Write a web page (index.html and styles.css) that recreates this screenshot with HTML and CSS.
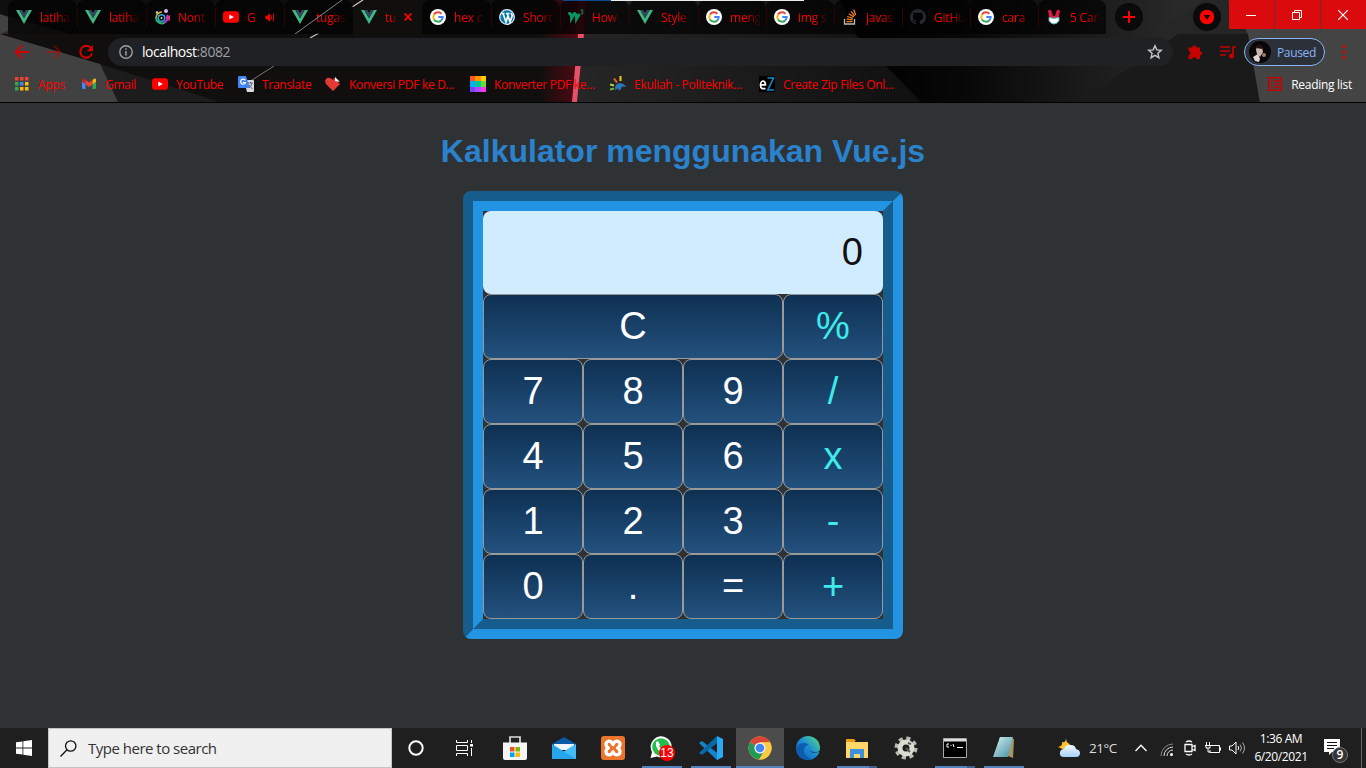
FILE: index.html
```html
<!DOCTYPE html>
<html lang="id">
<head>
<meta charset="utf-8">
<title>Kalkulator</title>
<link rel="stylesheet" href="styles.css">
</head>
<body>
<svg class="defs" width="0" height="0">
  <defs>
    <linearGradient id="gGlow" x1="0" x2="1"><stop offset="0" stop-color="#a00018" stop-opacity="0"/><stop offset=".85" stop-color="#a00018" stop-opacity=".5"/><stop offset="1" stop-color="#a00018" stop-opacity=".1"/></linearGradient>
    <linearGradient id="gMid" x1="0" x2="1"><stop offset="0" stop-color="#262626"/><stop offset=".6" stop-color="#181818"/><stop offset="1" stop-color="#101010"/></linearGradient>
    <linearGradient id="gRight" gradientUnits="userSpaceOnUse" x1="900" x2="1180" y1="0" y2="0"><stop offset="0" stop-color="#030303"/><stop offset=".25" stop-color="#080808"/><stop offset="1" stop-color="#292929"/></linearGradient>
    <linearGradient id="gEdge" x1="0" y1="1" x2="1" y2="0"><stop offset="0" stop-color="#0a54a6"/><stop offset=".5" stop-color="#1a8ad8"/><stop offset="1" stop-color="#5be07a"/></linearGradient>
    <linearGradient id="gNote" x1="0" x2="1" y2="1"><stop offset="0" stop-color="#d9f2f5"/><stop offset="1" stop-color="#3d8ea0"/></linearGradient>
    <linearGradient id="gCloud" x1="0" x2="0" y2="1"><stop offset="0" stop-color="#f2f8ff"/><stop offset="1" stop-color="#a9d2f7"/></linearGradient>
  </defs>
  <symbol id="vue" viewBox="0 0 16 16"><path fill="#41b883" d="M0 1h3.300L8 9.200 12.700 1H16L8 15z"/><path fill="#35495e" d="M3.300 1h3L8 4l1.700-3h3L8 9.200z"/></symbol>
  <symbol id="google" viewBox="0 0 16 16"><circle cx="8" cy="8" r="8" fill="#fff"/><g fill="none" stroke-width="2"><path stroke="#ea4335" d="M4 5.600A4.700 4.700 0 0 1 11.400 4.700"/><path stroke="#fbbc05" d="M4 5.600A4.700 4.700 0 0 0 4 10.400"/><path stroke="#34a853" d="M4 10.400A4.700 4.700 0 0 0 11.200 11.400"/><path stroke="#4285f4" d="M8.200 8h4.500A4.700 4.700 0 0 1 11.200 11.400"/></g></symbol>
  <symbol id="youtube" viewBox="0 0 16 16"><rect y="2.300" width="16" height="11.400" rx="3" fill="#f00"/><path fill="#fff" d="M6.300 5.400v5.200L10.800 8z"/></symbol>
</svg>

<header class="browser">
  <svg class="theme" width="1366" height="103" viewBox="0 0 1366 103">
    <rect width="1366" height="103" fill="#100f0e"/>
    <path fill="#1c1c1c" d="M100 64L220 102H110z"/>
    <path fill="#272727" d="M0 14l70 20H0z"/>
    <path fill="#414141" d="M0 14l8 3v14L0 34z"/>
    <path fill="#414141" d="M0 34l100 30 18 38H0z"/>
    <path fill="url(#gMid)" d="M588 0h270l67 103H577z"/>
    <path fill="url(#gRight)" d="M840 0h526v103H922L855 34z"/>
    <path fill="#262626" d="M1205 0h60v34h-115z"/>
    <path fill="#1a1a1a" d="M1178 34h72l10 68h-180z"/>
    <path fill="#444" d="M1228 0h138v103h-106l-12-69z"/>
    <path fill="url(#gGlow)" d="M545 0h45l-15 103h-35z"/>
    <path fill="#801328" d="M579 0h8l-4 34h-8z"/>
    <path fill="#e25167" d="M578 34h6l-7 68h-5z"/>
    <path stroke="#c8c8c8" stroke-width="1.200" d="M352 7l11-7M310 38l9-5"/>
    <path stroke="#777" d="M274 66l-33 21"/>
  </svg>
  <nav class="tabs">
    <div class="tab"><svg class="fav"><use href="#vue"/></svg><span>latiha</span></div>
    <div class="tab"><svg class="fav"><use href="#vue"/></svg><span>latiha</span></div>
    <div class="tab"><svg class="fav" viewBox="0 0 16 16" fill="none"><path stroke="#e4bb23" stroke-width="1.500" d="M8 3a6 6 0 0 0-6 6"/><path stroke="#27b56c" stroke-width="2" d="M2 8a6 6 0 0 0 8 6"/><path stroke="#b43bd2" stroke-width="2" d="M10 14a6 6 0 0 0 3-8"/><circle cx="7.500" cy="9" r="3.300" stroke="#34a7df" stroke-width="1.500"/><circle cx="7.500" cy="9" r="1" fill="#ddd"/><circle cx="12" cy="2" r="2" fill="#d5b8e8"/><circle cx="3" cy="3.500" r="1.300" fill="#ccc"/><path fill="#e32c92" d="M12 8l4-2v6l-4-2z"/></svg><span>Nont</span></div>
    <div class="tab"><svg class="fav"><use href="#youtube"/></svg><span class="short">G</span><svg class="sound" viewBox="0 0 10 10"><path fill="#f00" d="M0 3h2l3-3v10L2 7H0z"/><path fill="none" stroke="#f00" d="M6.500 2.500v5M9 .5v9"/></svg></div>
    <div class="tab nosep"><svg class="fav"><use href="#vue"/></svg><span>tugas</span><svg class="streak" width="52" height="34" viewBox="0 0 52 34"><path stroke="#888" d="M50 0L3 34"/></svg></div>
    <div class="tab active"><svg class="fav"><use href="#vue"/></svg><span class="short">tu</span><svg class="close" viewBox="0 0 8 8"><path stroke="#f00" stroke-width="1.700" d="M.5.500l7 7m0-7l-7 7"/></svg></div>
    <div class="tab"><svg class="fav"><use href="#google"/></svg><span>hex c</span></div>
    <div class="tab"><svg class="fav" viewBox="0 0 16 16"><circle cx="8" cy="8" r="7.300" fill="#087ab0" stroke="#d6ebf4" stroke-width="1.300"/><path fill="none" stroke="#fff" stroke-width="1.600" d="M2.500 4.500h3M4 4.500l3 8.500 2-6.500M7 4.500h3.500M8.300 4.500L11 13l2.300-6.500-1.300-2.500"/></svg><span>Short</span></div>
    <div class="tab"><svg class="fav" viewBox="0 0 16 16"><path fill="none" stroke="#059862" stroke-width="2.800" d="M.5 5.500l1 -1q2 0 2 5l3-5q2 0 2 5.500l3-5"/><path fill="none" stroke="#059862" d="M12.500 1h2.500l-1.300 1.700q2 0 1 2l-2 .2"/></svg><span>How</span></div>
    <div class="tab"><svg class="fav"><use href="#vue"/></svg><span>Style</span></div>
    <div class="tab slim"><svg class="fav"><use href="#google"/></svg><span>meng</span></div>
    <div class="tab slim"><svg class="fav"><use href="#google"/></svg><span>img s</span></div>
    <div class="tab slim"><svg class="fav" viewBox="0 0 16 16" fill="none"><path stroke="#bbb" stroke-width="1.300" d="M2.500 10v5h10v-5"/><path stroke="#f48024" stroke-width="1.300" d="M4.500 12.700h6M4.600 10.200l6 .7M5.200 7.500l5.600 1.800M6.700 4.700l5 3.200M9 2.300l3.700 4.500M11.700.5l2 5.500"/></svg><span>javas</span></div>
    <div class="tab slim"><svg class="fav" viewBox="0 0 16 16"><path fill="#24292e" d="M8 0a8 8 0 0 0-2.500 15.600c.4 0 .5-.2.500-.4v-1.500c-2.200.5-2.700-.9-2.700-.9-.4-1-.9-1.200-.9-1.200-.7-.5.100-.5.100-.5.800 0 1.200.8 1.200.8.700 1.200 1.900.9 2.300.7 0-.5.300-.9.500-1.100-1.800-.2-3.600-.9-3.600-4 0-.8.300-1.600.8-2.100 0-.2-.4-1 .1-2.100 0 0 .7-.2 2.200.8a7.600 7.600 0 0 1 4 0c1.500-1 2.200-.8 2.200-.8.500 1.100.1 1.900.1 2.100.5.600.8 1.300.8 2.100 0 3.100-1.900 3.800-3.700 4 .3.300.6.800.6 1.500v2.200c0 .200.100.500.500.400A8 8 0 0 0 8 0z"/></svg><span>GitHu</span></div>
    <div class="tab slim"><svg class="fav"><use href="#google"/></svg><span>cara</span></div>
    <div class="tab slim nosep"><svg class="fav bunny" viewBox="0 0 16 16"><path fill="#df1745" d="M2 2q1.500-2.500 3.500 0l1.500 5h2l1.500-5q2-2.500 3.500 0l-1.500 7h-9z"/><path fill="#fff" stroke="#4cb8b1" d="M3 8.500q5 1.500 10 0v3Q11 15 8 15t-5-3.500z"/></svg><span>5 Car</span></div>
    <div class="round add"><svg width="14" height="14" viewBox="0 0 14 14"><path stroke="#f00" stroke-width="2" d="M7 1v12M1 7h12"/></svg></div>
    <div class="round drop"><svg width="16" height="16" viewBox="0 0 16 16"><circle cx="8" cy="8" r="7.300" fill="#f00"/><path d="M4.500 6h7L8 10.700z" fill="#180808"/></svg></div>
    <div class="winbtns">
      <b><svg width="10" height="12" viewBox="0 0 10 12"><path stroke="#fff" d="M0 6.500h10"/></svg></b>
      <b><svg width="10" height="10" viewBox="0 0 10 10" fill="none" stroke="#fff"><path d="M.5 2.500h7v7h-7zM2.500 2V.5h7v7H8"/></svg></b>
      <b><svg width="10" height="10" viewBox="0 0 10 10" stroke="#fff" stroke-width="1.200"><path d="M0 0l10 10M10 0L0 10"/></svg></b>
    </div>
    <div class="strip"></div>
  </nav>
  <div class="toolbar">
    <svg class="navic" viewBox="0 0 16 16"><path fill="none" stroke="#d50000" stroke-width="1.800" d="M15 8H2M8 1.700L1.700 8 8 14.300"/></svg>
    <svg class="navic dim" viewBox="0 0 16 16"><path fill="none" stroke="#d50000" stroke-width="1.800" d="M1 8h13M8 1.700L14.300 8 8 14.300"/></svg>
    <svg class="navic" viewBox="0 0 16 16"><path fill="none" stroke="#d50000" stroke-width="2" d="M13 4A6 6 0 1 0 14 9.500"/><path fill="#d50000" d="M15 1v6.300H8.700z"/></svg>
    <div class="omnibox">
      <svg width="16" height="16" viewBox="0 0 16 16"><circle cx="8" cy="8" r="6.200" fill="none" stroke="#9aa0a6" stroke-width="1.400"/><path stroke="#9aa0a6" stroke-width="1.500" d="M8 7v4.500M8 4.300v1.500"/></svg>
      <span class="url">localhost<i>:8082</i></span>
      <svg class="star" width="16" height="16" viewBox="0 0 16 16"><path fill="none" stroke="#c8c8c8" stroke-width="1.400" d="M8 1.800l1.800 4.100 4.500.4-3.400 3 1 4.400L8 11.300l-3.900 2.400 1-4.400-3.400-3 4.500-.4z"/></svg>
    </div>
    <svg class="ext" width="16" height="16" viewBox="0 0 16 16"><path fill="#c90000" d="M5.300 3.500a2 2 0 0 1 4 0H13v3.700a2 2 0 0 1 0 4V15H9.300a2 2 0 0 0-4 0H1.500v-4a2 2 0 0 0 0-4V3.500z"/></svg>
    <svg class="media" width="18" height="16" viewBox="0 0 18 16"><path fill="none" stroke="#c90000" stroke-width="1.700" d="M1 3h10M1 7h10M1 11h6M14 12V3h3"/><circle cx="12.500" cy="12" r="2.500" fill="#c90000"/></svg>
    <div class="profile"><svg width="22" height="22" viewBox="0 0 22 22"><circle cx="11" cy="11" r="11" fill="#080606"/><path fill="#cab4ac" d="M8 5l5 1 1 5-3 5-3-3-1-4z"/><path fill="#ded6d4" d="M4 16l5-3 2 5-1 3-4-1z"/><path d="M7 7l6 1 1-3-5-2z" fill="#251111"/><circle cx="15" cy="14" r="2" fill="#9b7d73"/></svg><span>Paused</span></div>
    <svg class="dots" width="4" height="16" viewBox="0 0 4 16" fill="#d50000"><circle cx="2" cy="2.500" r="1.600"/><circle cx="2" cy="8" r="1.600"/><circle cx="2" cy="13.500" r="1.600"/></svg>
  </div>
  <div class="bookmarks">
    <a><svg viewBox="0 0 16 16"><path fill="#ea4335" d="M1 1h3.500v3.500H1zm5 0h3.500v3.500H6zm5 0h3.500v3.500H11z"/><path fill="#34a853" d="M1 6h3.500v3.500H1zm0 5h3.500v3.500H1z"/><path fill="#4285f4" d="M6 6h3.500v3.500H6z"/><path fill="#fbbc05" d="M11 6h3.500v3.500H11zm-5 5h3.500v3.500H6zm5 0h3.500v3.500H11z"/></svg><span>Apps</span></a>
    <a><svg viewBox="0 0 16 16"><path fill="#4285f4" d="M1 4l3.500 2.500V13H2q-1 0-1-1z"/><path fill="#34a853" d="M15 4l-3.500 2.500V13H14q1 0 1-1z"/><path fill="#fbbc05" d="M11.500 4l2-1.500Q15 2 15 4v1.500l-3.500 3z"/><path fill="#c5221f" d="M1 5.500V4q0-2 2-1.500L4.500 4v4z"/><path fill="#ea4335" d="M4.500 4L8 6.500 11.500 4v4.300L8 11 4.500 8.300z"/></svg><span>Gmail</span></a>
    <a><svg><use href="#youtube"/></svg><span>YouTube</span></a>
    <a><svg viewBox="0 0 16 16"><path fill="#d7dbe0" d="M6 4h9q1 0 1 1v10q0 1-1 1H9z"/><path fill="#4285f4" d="M1 0h7l4 12H1q-1 0-1-1V1q0-1 1-1z"/><path fill="none" stroke="#fff" stroke-width="1.200" d="M7.300 4.300A2.500 2.500 0 1 0 7.500 6.500H5"/><path stroke="#667" fill="none" d="M10 7h5M12.500 6v1M14 7q-1 4-3 5M11 9l3.500 4"/></svg><span>Translate</span></a>
    <a><svg viewBox="0 0 16 16"><path fill="#e53935" d="M8 15L1 8Q-1 4 2 2q3-1 6 2l1-2 6 6z"/><path fill="#fff" d="M10 1l5 5-5-1z"/></svg><span>Konversi PDF ke D...</span></a>
    <a><svg viewBox="0 0 16 16"><path fill="#ff5722" d="M0 0h5v5H0z"/><path fill="#ff9800" d="M5 0h6v5H5z"/><path fill="#ffcf00" d="M11 0h5v5h-5z"/><path fill="#00aef5" d="M0 5h5v6H0z"/><path fill="#00c896" d="M5 5h6v6H5z"/><path fill="#69dc35" d="M11 5h5v6h-5z"/><path fill="#7445ff" d="M0 11h5v5H0z"/><path fill="#b544ff" d="M5 11h6v5H5z"/><path fill="#f536ed" d="M11 11h5v5h-5z"/></svg><span>Konverter PDF ke...</span></a>
    <a><svg viewBox="0 0 16 16"><g stroke-width="2" fill="none"><path stroke="#b9d531" d="M0 8.500l4 1"/><path stroke="#71b53b" d="M0 13.500l4-1"/><path stroke="#f3cf1a" d="M10.500 0v5"/><path stroke="#ef6331" d="M4 2.500L7 6.500"/></g><path fill="#2878b9" d="M5 14q-1-6 5-7 5 1 6 4l-4-.5q-1 4.500-4 3.500l1-2-2 1z"/></svg><span>Ekuliah - Politeknik...</span></a>
    <a><svg viewBox="0 0 16 16"><path d="M0 0h16v16H0z"/><path fill="none" stroke="#fff" stroke-width="1.700" d="M1.500 9.200l5-.5Q6 5 4 5 1.500 5.500 1.500 9.500T6.500 12.500"/><path fill="none" stroke="#1688c9" stroke-width="1.600" d="M8.500 2h6L8.800 14H15"/></svg><span>Create Zip Files Onl...</span></a>
    <a class="reading"><svg viewBox="0 0 16 16" fill="none" stroke="#c60000"><path stroke-width="1.500" d="M1.700 1.700h12.600v12.600H1.700z"/><path stroke-width="1.300" d="M4 5h1.500M7 5h5.500M4 8h1.500M7 8h5.500M4 11h1.500M7 11h5.500"/></svg><span>Reading list</span></a>
  </div>
</header>

<main class="page">
  <h1>Kalkulator menggunakan Vue.js</h1>
  <section class="calculator">
    <div class="display">0</div>
    <div class="btn wide">C</div><div class="btn op">%</div>
    <div class="btn">7</div><div class="btn">8</div><div class="btn">9</div><div class="btn op">/</div>
    <div class="btn">4</div><div class="btn">5</div><div class="btn">6</div><div class="btn op">x</div>
    <div class="btn">1</div><div class="btn">2</div><div class="btn">3</div><div class="btn op">-</div>
    <div class="btn">0</div><div class="btn">.</div><div class="btn">=</div><div class="btn op">+</div>
  </section>
</main>

<footer class="taskbar">
  <div class="cell"><svg width="16" height="16" viewBox="0 0 16 16"><path fill="#fff" d="M0 2.300l6.500-.9v6.200H0zM7.300 1.300L16 0v7.600H7.300zM0 8.400h6.500v6.200L0 13.700zM7.300 8.400H16V16l-8.700-1.300z"/></svg></div>
  <div class="search"><svg width="17" height="17" viewBox="0 0 17 17"><circle cx="10.700" cy="6" r="5.200" fill="none" stroke="#111" stroke-width="1.300"/><path stroke="#111" stroke-width="1.300" d="M7 9.800L.5 16.500"/></svg><span>Type here to search</span></div>
  <div class="cell"><svg width="16" height="16" viewBox="0 0 16 16"><circle cx="8" cy="8" r="6.700" fill="none" stroke="#fff" stroke-width="2"/></svg></div>
  <div class="cell"><svg width="17" height="16" viewBox="0 0 17 16" fill="none" stroke="#fff"><path d="M.5 0v2.500h11V0M.5 16v-2.500h11V16M.5 5.500h11v5H.5zM15.500 0v3M15.500 8v8"/><path stroke-width="2.500" d="M14 5.300h3"/></svg></div>
  <div class="apps">
    <div class="cell"><svg width="24" height="24" viewBox="0 0 24 24"><path fill="none" stroke="#ddd" stroke-width="1.700" d="M7 8V1h10v7"/><path fill="#f5f5f5" d="M0 6.500h24V22q0 2-2 2H2q-2 0-2-2z"/><path fill="#f25022" d="M7 11h4.500v4.500H7z"/><path fill="#7fba00" d="M12.500 11H17v4.500h-4.500z"/><path fill="#00a4ef" d="M7 16.500h4.500V21H7z"/><path fill="#ffb900" d="M12.500 16.500H17V21h-4.500z"/></svg></div>
    <div class="cell"><svg width="24" height="24" viewBox="0 0 24 24"><path fill="#0858a7" d="M0 8l12-7 12 7v5H0z"/><path fill="#eef4fa" d="M2 8h20v6H2z"/><path fill="#27a5ec" d="M0 8l12 7.500L24 8v15H0z"/><path fill="#43bdf7" d="M24 8v15L10 14.500l2 1z"/></svg></div>
    <div class="cell"><svg width="24" height="24" viewBox="0 0 24 24"><rect width="24" height="24" rx="3" fill="#ed752b"/><path fill="none" stroke="#fff" stroke-width="3.200" stroke-linejoin="round" d="M12 8.500Q10.500 5 7.500 5.200 4.500 6 5 9q.5 1.800 2.500 3Q5 13 5 15.500 5 18.800 8 18.800q2.700 0 4-3 1.300 3 4 3 3 0 3-3.300 0-2.500-2.500-3.500 2-1.200 2.500-3 .5-3-2.500-3.800Q13.500 5 12 8.500z"/></svg></div>
    <div class="cell run"><svg width="26" height="26" viewBox="0 0 26 26"><path fill="#fff" d="M1.500 23L3 17A10.500 10.500 0 1 1 8 21.500z"/><circle cx="12" cy="12" r="8.800" fill="#23bd4b"/><path fill="#fff" d="M7 7l2-1 2 4-1 1q1.500 3 4 4l2-1 3 2-1 2q-7 2-11-7z"/><circle cx="18" cy="18" r="8" fill="#f00"/><text x="18" y="22" class="badge">13</text></svg></div>
    <div class="cell run"><svg width="24" height="24" viewBox="0 0 24 24"><path fill="#1485cd" d="M0 7l3-2 19 15-4 4z"/><path fill="#0969a8" d="M0 17L18 0v7L3 19z"/><path fill="#28a9f1" d="M18 0l6 3v18l-6 3z"/></svg></div>
    <div class="cell run current"><svg width="24" height="24" viewBox="0 0 24 24"><circle cx="12" cy="12" r="11.500" fill="#fcca3f"/><path fill="#db4437" d="M12 12L2 6.200A11.500 11.500 0 0 1 22 6.200H12z"/><path fill="#239957" d="M2 6.200A11.500 11.500 0 0 0 11 23.500L17 15z"/><path fill="#fcca3f" d="M12 6.300h10A11.500 11.500 0 0 1 11 23.500l5.500-9z"/><circle cx="12" cy="12" r="5.600" fill="#f4f4f4"/><circle cx="12" cy="12" r="4.300" fill="#4285f4"/></svg></div>
    <div class="cell"><svg width="24" height="24" viewBox="0 0 24 24"><circle cx="12" cy="12" r="12" fill="url(#gEdge)"/><path fill="#0f5cae" d="M0 13q2-6 8-6 3 0 5 2-4 0-5 4-1 7 6 9l1 1.500Q12 24 11 24 1 23 0 13z"/><path fill="#1d1d1d" d="M13 10q3 2 1 5 2 3 9 1 1.500-1 .7 1L24 20V15q-3 2-9 .5-1-.500-.5-1.500 1-2-1.500-4z"/></svg></div>
    <div class="cell run multi"><svg width="24" height="22" viewBox="0 0 24 22"><path fill="#e4a011" d="M1 2h8l2 2h-1v4H1z"/><path fill="#ffd768" d="M1 5h22v16H1z"/><path fill="#3c91dc" d="M5 12h14v9h-4v-4H9v4H5z"/></svg></div>
    <div class="cell"><svg width="24" height="24" viewBox="0 0 24 24"><circle cx="12" cy="12" r="9.500" fill="none" stroke="#b7bdb2" stroke-width="4" stroke-dasharray="4 3.460"/><circle cx="12" cy="12" r="6" fill="none" stroke="#d9dccf" stroke-width="5"/><path stroke="#555" stroke-width="2" d="M12 12l4 4M14 7l3 1"/></svg></div>
    <div class="cell run multi"><svg width="24" height="20" viewBox="0 0 24 20"><path fill="#000" stroke="#aaa" d="M.5.500h23v19H.5z"/><path fill="#ddd" d="M1 1h22v2.500H1z"/><path fill="none" stroke="#fff" d="M6 6H4v3h2M8 7v1M10 6l1 3M14 9.500h6"/></svg></div>
    <div class="cell run"><svg width="24" height="24" viewBox="0 0 24 24"><path fill="#a99466" d="M7 2l15 1-1 19-5-2z"/><path fill="url(#gNote)" d="M8 1h13l-5 20H1z"/></svg></div>
  </div>
  <div class="tray">
    <svg class="weather" width="22" height="20" viewBox="0 0 22 20"><path fill="#fdc22c" d="M8 0q0 5 4 6l-5 6-7-3q5-1 4-5 4 1 4-4z"/><path fill="url(#gCloud)" d="M6 19q-5 0-4-5 1-3 4-3 2-5 7-4 4 0 5 4 4 1 4 4 0 4-4 4z"/></svg>
    <span class="temp">21°C</span>
    <svg class="chev" width="12" height="8" viewBox="0 0 12 8"><path fill="none" stroke="#fff" stroke-width="1.300" d="M.5 7L6 1.300 11.500 7"/></svg>
    <svg class="wifi" width="13" height="13" viewBox="0 0 13 13" fill="none"><path stroke="#888" d="M1 13A12 12 0 0 1 13 1"/><path stroke="#ddd" d="M4 13a9 9 0 0 1 9-9M7 13a6 6 0 0 1 6-6"/><circle cx="11.500" cy="11.500" r="1.500" fill="#fff"/></svg>
    <svg class="meet" width="12" height="16" viewBox="0 0 12 16" fill="none" stroke="#fff"><path stroke-width="1.300" d="M1 4.500h7v7H1zM8.500 6.500l2.500-1v5l-2.500-1M2 2q3-2 6 0M2 14q3 2 6 0"/></svg>
    <svg class="batt" width="16" height="13" viewBox="0 0 16 13" fill="none" stroke="#fff"><path d="M6 3.500h8.500v7H5V8M15.500 5.500v3M1.500 0v3M4.500 0v3M0 3.500h6M1 4v2h4V4M3 6v4h2"/></svg>
    <svg class="vol" width="16" height="14" viewBox="0 0 16 14" fill="none" stroke="#fff"><path d="M.5 5H3l4-4v12L3 9H.5zM9 5q1.500 2 0 4"/><path stroke="#aaa" d="M11 3.500q3 3.500 0 7M13.500 1.500q4 5.500 0 11"/></svg>
    <div class="clock"><span>1:36 AM</span><span>6/20/2021</span></div>
    <svg class="notif" width="26" height="24" viewBox="0 0 26 24"><path fill="#fff" d="M0 0h16v13H8l-3 3v-3H0z"/><path stroke="#111" d="M3 3.500h10M3 6.500h10M3 9.500h7"/><circle cx="16" cy="16" r="7.500" fill="#343434" stroke="#777"/><text x="16" y="20" class="count">9</text></svg>
    <i class="peek"></i>
  </div>
</footer>
</body>
</html>
```
FILE: styles.css
```css
* { box-sizing: border-box; }
body { margin: 0; width: 1366px; height: 768px; overflow: hidden; display: flex; flex-direction: column; background: #2f3235; font-family: "Open Sans", "Noto Sans", sans-serif; }
svg { display: block; flex: none; }
.defs { position: absolute; }

.browser { position: relative; height: 103px; flex: none; border-bottom: 1px solid #000; font-size: 12px; color: #f00; }
.theme { position: absolute; inset: 0; z-index: -1; }
.tabs { display: flex; height: 34px; padding-left: 8px; }
.tab { position: relative; display: flex; align-items: center; width: 69px; flex: none; height: 34px; padding-left: 8px; background: rgba(3, 3, 3, .74); border-radius: 8px 8px 0 0; white-space: nowrap; }
.tab.slim { width: 68px; }
.tab::after { content: ""; position: absolute; right: -1px; top: 8px; width: 1px; height: 19px; background: #b50000; }
.tab.nosep::after, .tab.active::after { display: none; }
.tab.active { background: none; }
.tab span { width: 30px; margin-left: 8px; letter-spacing: -.2px; background: linear-gradient(90deg, #f00 55%, rgba(255, 0, 0, .15) 95%); -webkit-background-clip: text; background-clip: text; color: transparent; }
.tab .short { width: 12px; }
.fav { width: 16px; height: 16px; }
.sound { width: 10px; height: 9px; margin-left: 6px; }
.close { width: 8px; height: 8px; margin-left: 7px; }
.streak { position: absolute; left: 8px; top: 0; }
.strip { position: absolute; left: 563px; top: 0; width: 241px; height: 1px; background: linear-gradient(90deg, #0d4a8c 48px, #ececec 48px); }
.round { display: flex; align-items: center; justify-content: center; width: 28px; height: 28px; margin-top: 3px; border-radius: 50%; background: #0a0a0a; flex: none; }
.add { margin-left: 9px; }
.drop { margin-left: 50px; }
.winbtns { display: flex; gap: 1px; margin-left: auto; height: 29px; background: #6b3030; }
.winbtns b { display: flex; align-items: center; justify-content: center; width: 45px; padding-right: 2px; background: #db0b0d; }

.toolbar { display: flex; align-items: center; height: 36px; padding-left: 14px; }
.navic { width: 16px; height: 16px; margin-right: 16px; }
.dim { opacity: .45; }
.omnibox { display: flex; align-items: center; width: 1065px; height: 28px; padding: 0 10px; margin-left: -2px; border-radius: 14px; background: #202124; }
.url { margin-left: 8px; margin-top: -1px; color: #fff; font-size: 14px; letter-spacing: -.45px; }
.url i { font-style: normal; color: #9aa0a6; }
.star { margin-left: auto; }
.ext { margin-left: 14px; }
.media { margin-left: 16px; }
.profile { display: flex; align-items: center; width: 81px; height: 28px; margin-left: 7px; padding-left: 4px; border: 1px solid #8ab4f8; border-radius: 14px; background: #2b3039; color: #8ab4f8; }
.profile span { margin-left: 6px; letter-spacing: -.35px; }
.dots { margin-left: 17px; }

.bookmarks { display: grid; grid-template-columns: 67px 71px 86px 87px 145px 140px 149px 150px 1fr; height: 28px; padding: 0 14px; align-items: center; }
.bookmarks a { display: flex; align-items: center; gap: 8px; white-space: nowrap; letter-spacing: -.29px; }
.bookmarks a svg { width: 16px; height: 16px; }
.bookmarks .reading { justify-content: flex-end; color: #fff; font-weight: 500; }

.page { flex: 1; display: flex; flex-direction: column; align-items: center; font-family: "Liberation Sans", Arial, sans-serif; }
.page h1 { margin: 30px 0 21px; font-size: 32px; line-height: 37px; color: #2a82cc; }
.calculator { display: grid; grid-template-columns: repeat(4, 100px); grid-template-rows: 83px repeat(5, 65px); border: 20px groove #2394e2; border-radius: 8px; font-size: 38px; color: #fff; }
.display { grid-column: 1 / -1; padding: 0 20px; border-radius: 8px; background: #d1ebff; color: #111; text-align: right; line-height: 82px; }
.btn { border: 1px solid #999; border-radius: 8px; background: linear-gradient(#0e3052, #23517e); text-align: center; line-height: 63px; }
.wide { grid-column: span 3; }
.op { color: #3eebeb; }

.taskbar { display: flex; height: 40px; flex: none; background: #1f1f1f; color: #fff; }
.cell { display: flex; align-items: center; justify-content: center; width: 48px; height: 40px; flex: none; }
.search { display: flex; align-items: center; width: 344px; padding-left: 11px; border: 1px solid #c4c4c4; background: #f0f0f0; color: #333; font-size: 15px; letter-spacing: -.5px; }
.search span { margin-left: 11px; }
.apps { display: flex; gap: 1px; margin-left: 3px; }
.run { background: linear-gradient(#5183bf, #5183bf) 4px 38px / 40px 2px no-repeat; }
.current { margin-right: -1px; background: linear-gradient(#5183bf, #5183bf) 0 38px / 48px 2px no-repeat, #4c4c4c; }
.multi { background: linear-gradient(90deg, #5183bf 80%, #3d618c 80%) 4px 38px / 40px 2px no-repeat; }
.badge { fill: #fff; font: 12px "Liberation Sans", sans-serif; text-anchor: middle; }
.tray { display: flex; align-items: center; margin-left: auto; font-size: 12px; }
.temp { width: 30px; margin-left: 9px; font-size: 13.500px; letter-spacing: -.5px; color: #ddd; }
.chev { margin-left: 16px; }
.wifi { margin-left: 13px; margin-top: 2px; }
.meet { margin-left: 11px; }
.batt { margin-left: 9px; }
.vol { margin-left: 8px; }
.clock { display: flex; flex-direction: column; align-items: center; width: 54px; margin-left: 9px; line-height: 18px; white-space: nowrap; letter-spacing: -.4px; }
.notif { margin-left: 16px; margin-top: 6px; }
.count { fill: #fff; font: 600 12px "Open Sans", sans-serif; text-anchor: middle; }
.peek { width: 1px; height: 40px; margin-left: 11px; margin-right: 4px; background: #666; }
```
